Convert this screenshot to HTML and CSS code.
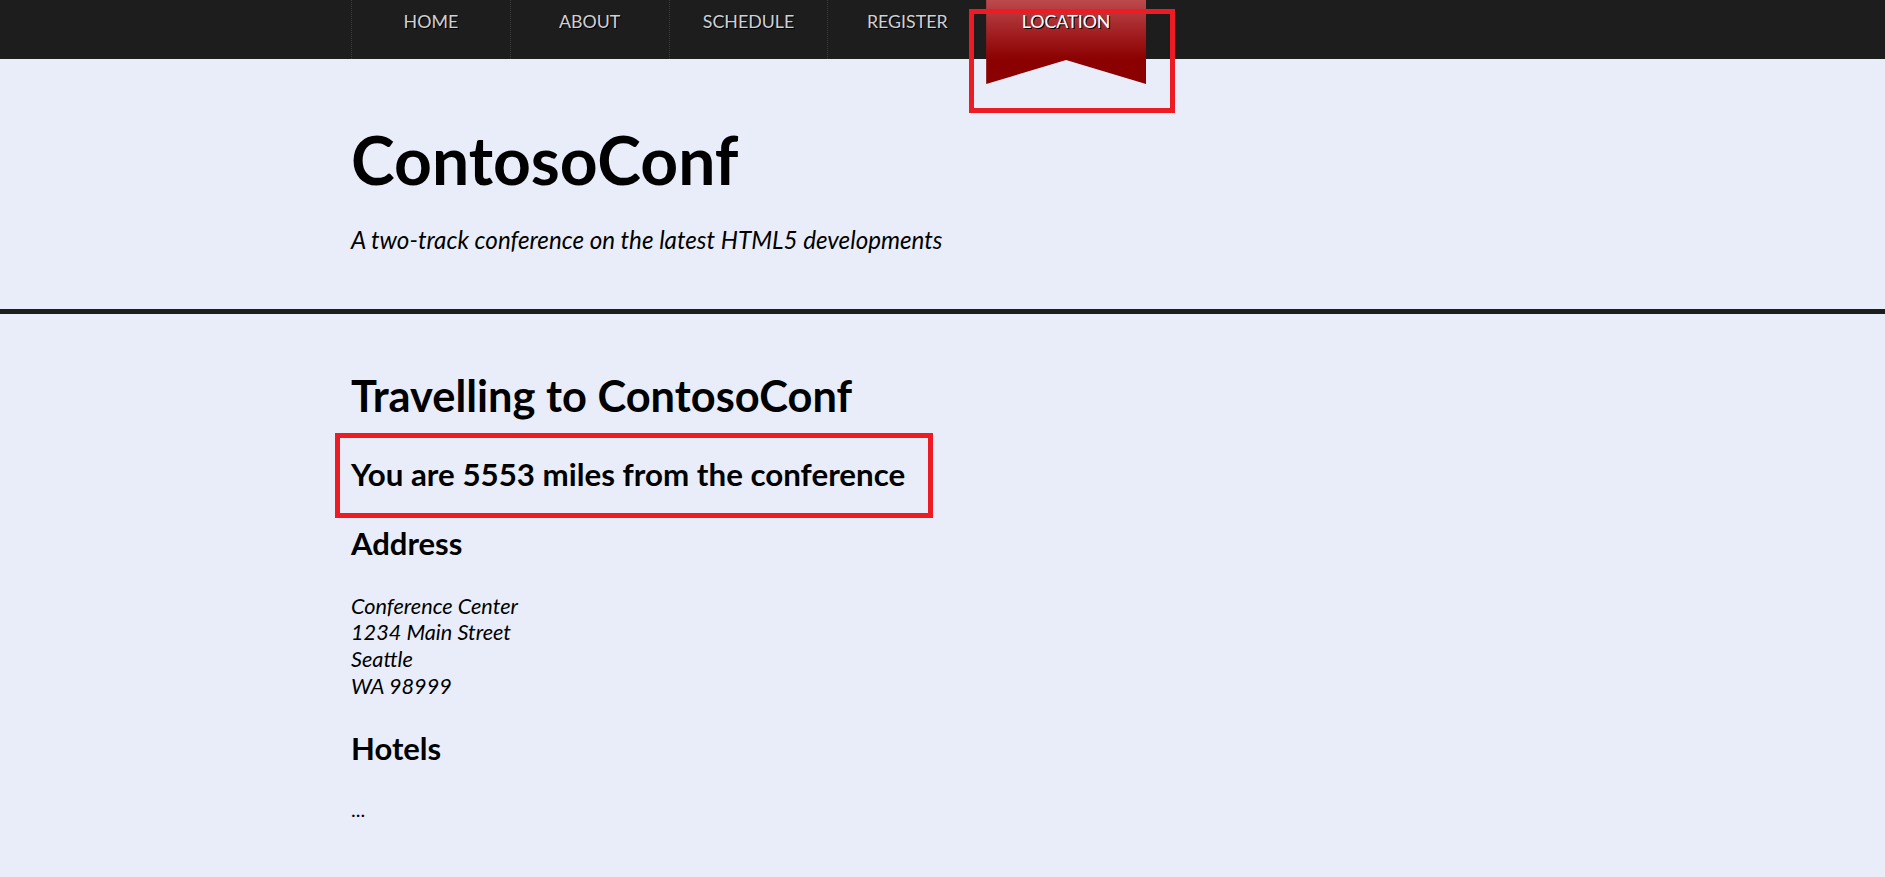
FILE: index.html
```html
<!DOCTYPE html>
<html lang="en">
<head>
<meta charset="utf-8">
<title>ContosoConf - Location</title>
<link rel="stylesheet" href="styles.css">
</head>
<body>
<nav class="topnav">
  <ul class="container nav-list">
    <li class="nav-item"><a href="#">HOME</a></li>
    <li class="nav-item"><a href="#">ABOUT</a></li>
    <li class="nav-item"><a href="#">SCHEDULE</a></li>
    <li class="nav-item"><a href="#">REGISTER</a></li>
    <li class="nav-item active"><a href="#">LOCATION</a><span class="annot annot-ribbon"></span></li>
  </ul>
</nav>
<header class="page-header">
  <div class="container">
    <h1 class="site-title">ContosoConf</h1>
    <p class="tagline">A two-track conference on the latest HTML5 developments</p>
  </div>
</header>
<main class="container content">
  <h2 class="page-title">Travelling to ContosoConf</h2>
  <div class="distance-wrap">
    <h3 class="distance">You are 5553 miles from the conference</h3>
    <span class="annot annot-distance"></span>
  </div>
  <h4 class="section-title">Address</h4>
  <address class="addr">Conference Center<br>1234 Main Street<br>Seattle<br>WA 98999</address>
  <h4 class="section-title hotels">Hotels</h4>
  <p class="more">...</p>
</main>
</body>
</html>
```
FILE: styles.css
```css
* { box-sizing: border-box; }
html, body { margin: 0; padding: 0; }
body {
  background: #e9edf9;
  font-family: Lato, "Open Sans", sans-serif;
  color: #000;
}
.container {
  width: 1183px;
  margin: 0 auto;
}
.topnav {
  background: #1d1d1d;
  height: 59px;
}
.nav-list {
  list-style: none;
  padding: 0;
  display: flex;
  height: 59px;
}
.nav-item {
  width: 158.8px;
  border-left: 1px dotted #3c3c3c;
  position: relative;
}
.nav-item:last-child { border-right: 1px dotted #3c3c3c; }
.nav-item a {
  display: block;
  height: 59px;
  padding-top: 10px;
  text-align: center;
  text-decoration: none;
  color: #d0d0d4;
  font-size: 17.8px;
  line-height: 22px;
  text-shadow: 1px 1px 0 #000;
}
.nav-item.active a {
  height: 84px;
  color: #fff;
  background: linear-gradient(to bottom, #bc4a4d 0, #a01c1f 35px, #8b0000 60px, #8b0000 100%);
  clip-path: polygon(0 0, 100% 0, 100% 84px, 50% 60px, 0 84px);
  margin: 0 -2px 0 -1px;
}
.annot {
  position: absolute;
  border: 5px solid #ed1c24;
  pointer-events: none;
}
.annot-ribbon {
  top: 9px;
  left: -18px;
  right: -31px;
  height: 104px;
}
.page-header {
  border-bottom: 5px solid #1d1d1d;
  padding-top: 61px;
  padding-bottom: 54px;
}
.site-title {
  margin: 0;
  font-size: 66px;
  line-height: 80px;
  font-weight: 700;
}
.tagline {
  margin: 25px 0 0;
  font-style: italic;
  font-size: 24.2px;
  line-height: 30px;
}
.content { padding-top: 55px; }
.page-title {
  margin: 0;
  font-size: 43.4px;
  line-height: 52px;
  font-weight: 700;
}
.distance-wrap {
  position: relative;
  margin-top: 36px;
}
.distance {
  margin: 0;
  font-size: 31.3px;
  line-height: 34px;
  font-weight: 700;
}
.annot-distance {
  top: -24px;
  left: -16px;
  width: 598px;
  height: 85px;
}
.section-title {
  margin: 35px 0 0;
  font-size: 31px;
  line-height: 34px;
  font-weight: 700;
}
.addr {
  margin-top: 32.5px;
  font-style: italic;
  font-size: 21.7px;
  line-height: 26.7px;
}
.hotels { margin-top: 32px; }
.more {
  margin: 31px 0 0;
  font-size: 20px;
  line-height: 26px;
}
```
